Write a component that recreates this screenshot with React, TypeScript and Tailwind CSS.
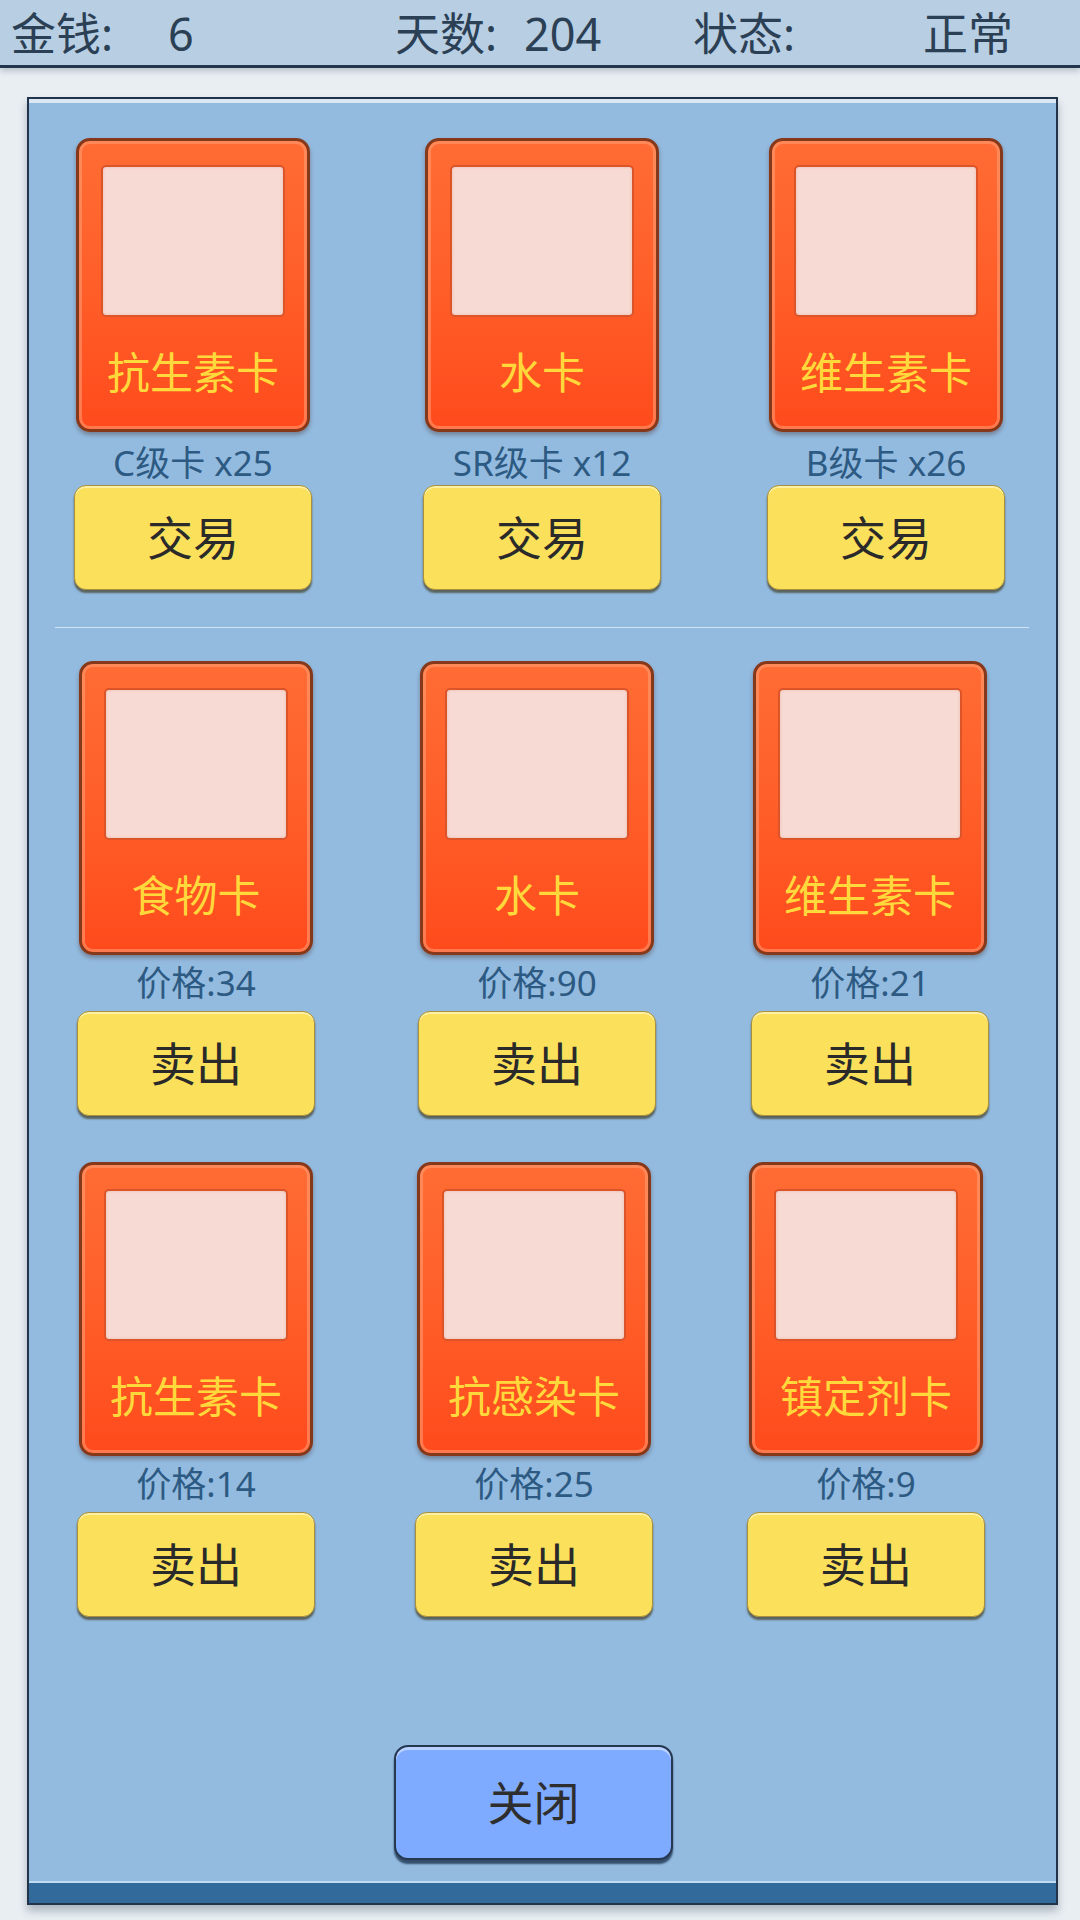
type Item = { name: string; sub: string; action: string };

const tradeRow: Item[] = [
  { name: "抗生素卡", sub: "C级卡 x25", action: "交易" },
  { name: "水卡", sub: "SR级卡 x12", action: "交易" },
  { name: "维生素卡", sub: "B级卡 x26", action: "交易" },
];

const sellRow1: Item[] = [
  { name: "食物卡", sub: "价格:34", action: "卖出" },
  { name: "水卡", sub: "价格:90", action: "卖出" },
  { name: "维生素卡", sub: "价格:21", action: "卖出" },
];

const sellRow2: Item[] = [
  { name: "抗生素卡", sub: "价格:14", action: "卖出" },
  { name: "抗感染卡", sub: "价格:25", action: "卖出" },
  { name: "镇定剂卡", sub: "价格:9", action: "卖出" },
];

function Card({ item, trade }: { item: Item; trade?: boolean }) {
  return (
    <div className="flex w-[238px] flex-col items-center">
      {/* card face */}
      <div className="box-border flex h-[294px] w-[234px] flex-col rounded-[14px] border-[3px] border-[#86391a] bg-gradient-to-b from-[#ff6c34] via-[#ff5e29] to-[#ff4a1c] px-[22px] pt-[24px] shadow-[inset_0_0_0_3px_rgba(255,160,120,0.55),0_3px_4px_rgba(60,30,20,0.35)]">
        <div className="h-[152px] w-full rounded-[5px] border-2 border-[#dc5429] bg-[#f7dad3] shadow-[inset_0_0_3px_rgba(200,90,60,0.25)]" />
        <div className="flex flex-1 items-center justify-center text-[43px] leading-normal text-[#ffd93b]">
          {item.name}
        </div>
      </div>
      <div
        className={
          trade
            ? "flex h-[53px] items-center pt-[10px] text-[35px] leading-normal text-[#2d5a82]"
            : "flex h-[56px] items-center text-[35px] leading-normal text-[#2d5a82]"
        }
      >
        {item.sub}
      </div>
      <button className="box-border flex h-[105px] w-[238px] items-center justify-center rounded-[12px] border border-[#a8903e] bg-[#fbe05b] text-[46px] leading-normal text-[#2a2a2a] shadow-[inset_0_2px_0_#fff0a6,0_3px_2px_rgba(70,70,50,0.75)]">
        {item.action}
      </button>
    </div>
  );
}

export default function App() {
  return (
    <div className="h-[1920px] w-[1080px] overflow-hidden bg-[#e9eef3] font-['Noto_Sans','Noto_Sans_CJK_SC',sans-serif]">
      {/* top status bar */}
      <header className="h-[68px] border-b-[3px] border-[#22364c] bg-[#b8cee3] text-[45px] leading-normal text-[#2b4055] shadow-[0_3px_6px_rgba(40,60,80,0.25)]">
        <div className="flex h-[65px] items-start pl-[11px]">
          <span className="w-[157px]">金钱:</span>
          <span className="w-[227px]">6</span>
          <span className="w-[129px]">天数:</span>
          <span className="w-[169px]">204</span>
          <span className="w-[230px]">状态:</span>
          <span>正常</span>
        </div>
      </header>

      {/* shop panel */}
      <div className="ml-[27px] mt-[29px] box-border flex h-[1808px] w-[1031px] flex-col border-2 border-[#22344a] bg-[#93bbe0] shadow-[inset_0_4px_0_#dbe8f4,0_6px_8px_rgba(30,50,70,0.3)]">
        <div className="mt-[39px] flex pl-[45px]">
          <Card item={tradeRow[0]} trade />
          <div className="ml-[111px]"><Card item={tradeRow[1]} trade /></div>
          <div className="ml-[106px]"><Card item={tradeRow[2]} trade /></div>
        </div>

        <div className="ml-[26px] mt-[37px] h-px w-[974px] bg-[#d0e3f5]" />

        <div className="mt-[33px] flex pl-[48px]">
          <Card item={sellRow1[0]} />
          <div className="ml-[103px]"><Card item={sellRow1[1]} /></div>
          <div className="ml-[95px]"><Card item={sellRow1[2]} /></div>
        </div>

        <div className="mt-[46px] flex pl-[48px]">
          <Card item={sellRow2[0]} />
          <div className="ml-[100px]"><Card item={sellRow2[1]} /></div>
          <div className="ml-[94px]"><Card item={sellRow2[2]} /></div>
        </div>

        <button className="ml-[365px] mt-[128px] box-border flex h-[115px] w-[279px] items-center justify-center rounded-[14px] border-2 border-[#26384f] bg-[#7eaaff] text-[46px] leading-normal text-[#2e2e2e] shadow-[inset_0_3px_0_#b9d1ff,0_4px_2px_rgba(20,40,70,0.75)]">
          关闭
        </button>

        <div className="flex-1" />
        <div className="h-[2px] bg-[#c2dcf2]" />
        <div className="h-[20px] bg-[#336a9c]" />
      </div>
    </div>
  );
}
